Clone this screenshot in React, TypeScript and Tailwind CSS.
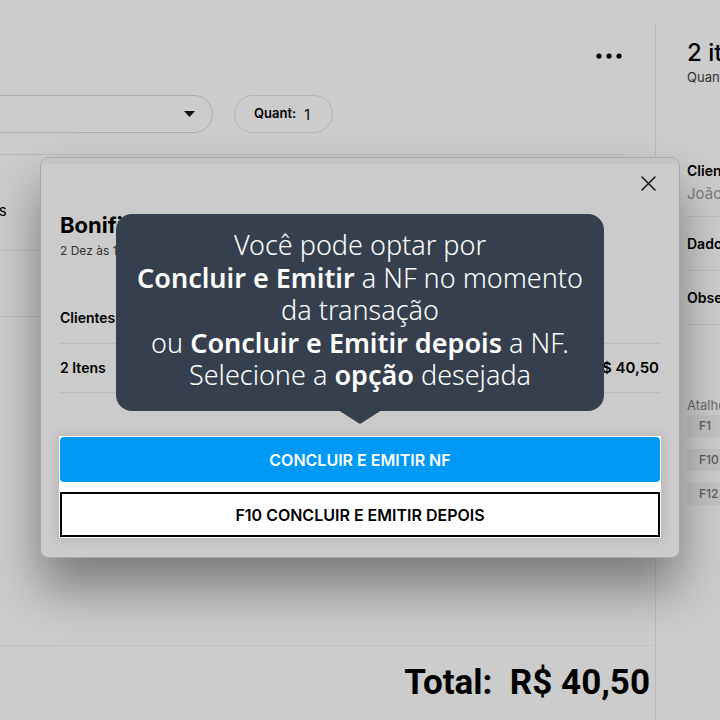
import React from 'react';

function Dots() {
  return (
    <svg width="26" height="6" viewBox="0 0 26 6" className="block">
      <circle cx="3" cy="3" r="2.6" fill="#000" />
      <circle cx="13" cy="3" r="2.6" fill="#000" />
      <circle cx="23" cy="3" r="2.6" fill="#000" />
    </svg>
  );
}

function CloseIcon() {
  return (
    <svg width="15" height="15" viewBox="0 0 15 15" className="block">
      <path d="M1 1L14 14M14 1L1 14" stroke="#1a1a1a" strokeWidth="1.6" strokeLinecap="round" />
    </svg>
  );
}

function Chip({ label }: { label: string }) {
  return (
    <div className="flex h-[22px] w-[44px] shrink-0 items-center rounded-[4px] bg-[#c3c3c3] pl-[12px] text-[12px] font-medium text-[#5c5c5c]">
      {label}
    </div>
  );
}

export default function App() {
  return (
    <div className="relative h-[720px] w-[720px] overflow-hidden bg-[#cccccc] font-['Inter',sans-serif] text-black">
      <div className="flex h-full">
        <main className="flex w-[655px] shrink-0 flex-col">
          <div className="flex-1">
            <div className="flex justify-end pr-[33px] pt-[53px]">
              <Dots />
            </div>
            <div className="mt-[36px] flex items-center gap-[21px]">
              <div className="-ml-[40px] flex h-[38px] w-[253px] items-center justify-end rounded-full border border-[#adadad] pr-[17px]">
                <svg width="11" height="6" viewBox="0 0 11 6" className="block">
                  <path d="M0 0H11L5.5 6Z" fill="#111" />
                </svg>
              </div>
              <div className="flex h-[38px] w-[99px] items-center rounded-full border border-[#b3b3b3] pl-[19px]">
                <span className="text-[13px] font-semibold">Quant:</span>
                <span className="ml-[8px] text-[14px]">1</span>
              </div>
            </div>
            <div className="mr-[30px] mt-[21px] border-b border-[#b8b8b8]" />
            <div className="-ml-[6px] w-[46px]">
              <div className="border-b border-[#bdbdbd] pb-[29px] pt-[46px] text-[15px] leading-[20px]">ts</div>
              <div className="h-[66px] border-b border-[#bdbdbd]" />
            </div>
          </div>
          <footer className="flex h-[75px] items-center justify-end border-t border-[#c0c0c0] pb-[2px] pr-[5px]">
            <span className="whitespace-nowrap font-['Roboto',sans-serif] text-[35px] font-bold leading-none">Total:&nbsp; R$ 40,50</span>
          </footer>
        </main>
        <aside className="mt-[23px] w-[65px] shrink-0 overflow-hidden border-l border-[#bcbcbc] pl-[31px]">
          <div className="whitespace-nowrap pt-[14px] text-[24px] font-medium leading-[32px]">2 itens</div>
          <div className="whitespace-nowrap text-[13px] leading-[16px] text-[#333]">Quantidade</div>
          <div className="mt-[76px] border-b border-[#bdbdbd] pb-[12px]">
            <div className="whitespace-nowrap text-[14px] font-semibold leading-[20px]">Cliente</div>
            <div className="mt-[3px] whitespace-nowrap text-[15px] leading-[20px] text-[#7a7a7a]">João</div>
          </div>
          <div className="flex h-[54px] items-center whitespace-nowrap border-b border-[#bdbdbd] text-[14px] font-semibold">Dados</div>
          <div className="flex h-[54px] items-center whitespace-nowrap border-b border-[#bdbdbd] text-[14px] font-semibold">Observações</div>
          <div className="mt-[72px] whitespace-nowrap text-[13px] leading-[16px] text-[#6a6a6a]">Atalhos</div>
          <div className="mt-[2px] flex flex-col gap-[12px]">
            <Chip label="F1" />
            <Chip label="F10" />
            <Chip label="F12" />
          </div>
        </aside>
      </div>

      <div className="absolute left-[40px] top-[157px] w-[640px] overflow-hidden rounded-[8px] border border-[#a9a9a9] bg-[#cbcbcb] px-[19px] pb-[19px] shadow-[0_30px_50px_rgba(0,0,0,0.4)]">
        <div className="-mx-[19px] h-[6px] bg-[#c4c4c4]" />
        <div className="mt-[12px] flex justify-end pr-[4px]">
          <CloseIcon />
        </div>
        <div className="mt-[20px] text-[22px] font-bold leading-[28px]">Bonificação</div>
        <div className="mt-[4px] text-[12px] leading-[16px] text-[#333]">2 Dez às 10:30</div>
        <div className="mt-[49px] border-b border-[#bababa] pb-[15px] text-[14px] font-semibold leading-[20px]">Clientes:</div>
        <div className="flex justify-between border-b border-[#bababa] py-[14px] text-[14px] font-semibold leading-[20px]">
          <span>2 Itens</span>
          <span className="pr-[1px] text-[15px]">R$ 40,50</span>
        </div>
        <div className="-mx-px mt-[43px] bg-white p-px shadow-[0_0_10px_rgba(0,0,0,0.15)]">
          <button type="button" className="flex h-[45px] w-full items-center justify-center rounded-[4px] bg-[#0099f6] text-[16px] font-semibold text-white">
            CONCLUIR E EMITIR NF
          </button>
          <button type="button" className="mt-[10px] flex h-[45px] w-full items-center justify-center border-2 border-black bg-white text-[16px] font-semibold text-black">
            F10 CONCLUIR E EMITIR DEPOIS
          </button>
        </div>
      </div>

      <div className="absolute left-[116px] top-[214px] h-[197px] w-[488px] rounded-[16px] bg-[#363f4d] pt-[15px] text-center font-['Noto_Sans',sans-serif] text-[27px] font-light leading-[32.5px] text-white">
        Você pode optar por
        <br />
        <strong className="font-semibold">Concluir e Emitir</strong> a NF no momento
        <br />
        da transação
        <br />
        ou <strong className="font-semibold">Concluir e Emitir depois</strong> a NF.
        <br />
        Selecione a <strong className="font-semibold">opção</strong> desejada
        <svg width="44" height="14" viewBox="0 0 44 14" className="absolute left-[222px] top-[196px] block">
          <path d="M0 0H44L22 14Z" fill="#363f4d" />
        </svg>
      </div>
    </div>
  );
}
